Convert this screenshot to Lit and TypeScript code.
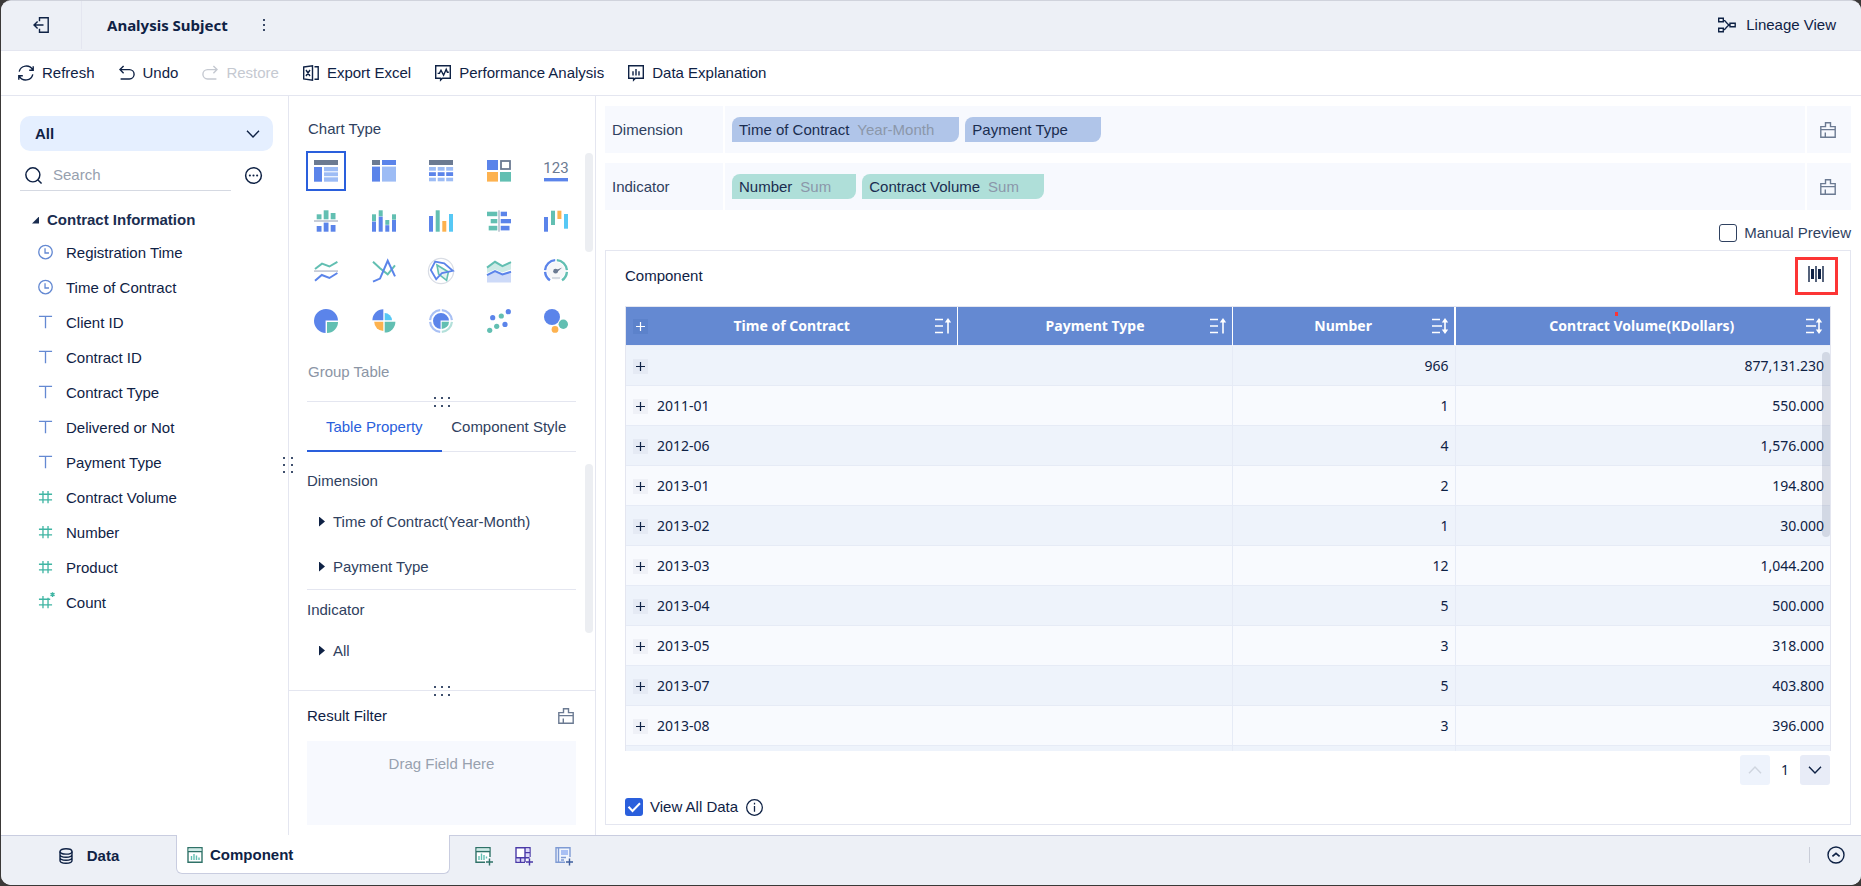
import { LitElement, html, svg, css, nothing } from "lit";
import type { TemplateResult } from "lit";
import { customElement, state } from "lit/decorators.js";
import { classMap } from "lit/directives/class-map.js";

const BLUE = "#5b84ea";
const LIGHT = "#9dbcf5";
const TEAL = "#62bfb2";
const ORANGE = "#fdb24f";
const CYAN = "#56c8f5";
const SLATE = "#6b7a92";
const RULE = "#c7cdd8";

const rect = (x: number, y: number, w: number, h: number, fill: string) =>
  svg`<rect x=${x} y=${y} width=${w} height=${h} fill=${fill}></rect>`;
const line = (points: string, stroke: string) =>
  svg`<polyline points=${points} fill="none" stroke=${stroke} stroke-width="2"></polyline>`;
const dot = (cx: number, cy: number, r: number, fill: string) =>
  svg`<circle cx=${cx} cy=${cy} r=${r} fill=${fill}></circle>`;

interface ChartType {
  name: string;
  art: unknown;
}

const CHART_TYPES: ChartType[] = [
  {
    name: "Group Table",
    art: [
      rect(0, 1, 24, 5, SLATE), rect(0, 8, 8, 14.7, BLUE),
      rect(10, 8, 14, 4.3, LIGHT), rect(10, 13.3, 14, 3.9, LIGHT), rect(10, 18.3, 14, 4.4, LIGHT),
    ],
  },
  {
    name: "Cross Table",
    art: [
      rect(0, 1, 8, 5, SLATE), rect(10, 1, 14, 5, BLUE),
      rect(0, 7.6, 8, 15, BLUE), rect(10, 7.6, 14, 15, LIGHT),
    ],
  },
  {
    name: "Detail Table",
    art: [
      rect(0, 1, 24, 5, SLATE),
      ...[0, 8.7, 17.2].map((x) => [
        rect(x, 8, 6.9, 3.7, LIGHT), rect(x, 13.2, 6.9, 3.8, BLUE), rect(x, 18.7, 6.9, 3.6, LIGHT),
      ]),
    ],
  },
  {
    name: "Color Table",
    art: [
      rect(0, 1, 11, 10, BLUE),
      svg`<rect x="14" y="2" width="9" height="8" fill="none" stroke=${SLATE} stroke-width="1.8"></rect>`,
      rect(0, 13, 11, 9.6, ORANGE), rect(13, 13, 11, 9.6, TEAL),
    ],
  },
  {
    name: "KPI Card",
    art: [
      svg`<text x="12" y="14" text-anchor="middle" class="kpi">123</text>`,
      rect(0, 19, 24, 3.4, BLUE),
    ],
  },
  {
    name: "Contrast Column Chart",
    art: [
      rect(2.7, 5.3, 4.8, 5, TEAL), rect(9.7, 1.3, 4.8, 9, TEAL), rect(16.7, 4, 4.8, 6.3, TEAL),
      rect(0, 11, 24, 2, RULE),
      rect(2.7, 17, 4.8, 5.7, BLUE), rect(9.7, 13.6, 4.8, 9.1, BLUE), rect(16.7, 16, 4.8, 6.7, BLUE),
    ],
  },
  {
    name: "Stacked Column Chart",
    art: [
      rect(0, 5.3, 4, 7, TEAL), rect(0, 12.6, 4, 10.1, BLUE),
      rect(6.7, 1.3, 4, 6, TEAL), rect(6.7, 7.6, 4, 15.1, BLUE),
      rect(13.3, 11, 4, 4.8, TEAL), rect(13.3, 16.2, 4, 6.5, BLUE),
      rect(20, 5.3, 4, 5.4, TEAL), rect(20, 11, 4, 11.7, BLUE),
    ],
  },
  {
    name: "Multi-Series Column Chart",
    art: [
      rect(0, 7, 4, 15.7, BLUE), rect(6.7, 1.3, 4, 21.4, TEAL),
      rect(13.3, 12, 4, 10.7, ORANGE), rect(20, 5, 4, 17.7, CYAN),
    ],
  },
  {
    name: "Contrast Bar Chart",
    art: [
      rect(0, 2.7, 10.3, 4.5, TEAL), rect(3.7, 10, 6.6, 4.3, TEAL), rect(1.7, 16.8, 8.6, 4.6, TEAL),
      rect(11, 1.3, 2, 21.4, RULE),
      rect(13.7, 2.7, 6.3, 4.5, BLUE), rect(13.7, 10, 10.3, 4.3, BLUE), rect(13.7, 16.8, 8.8, 4.6, BLUE),
    ],
  },
  {
    name: "Waterfall Chart",
    art: [
      rect(0, 8, 4, 14.7, BLUE), rect(7, 1.7, 4, 14.3, TEAL),
      rect(13.4, 1.7, 4, 8.3, ORANGE), rect(20, 5, 4, 14.7, CYAN),
    ],
  },
  {
    name: "Range Line Chart",
    art: [
      line("1,10 8,4.6 15.4,7.5 23.4,2.8", TEAL), rect(0, 11.2, 24, 1.8, RULE),
      line("1,21.8 7.8,16 15.4,19 23.4,14", BLUE),
    ],
  },
  {
    name: "Line Chart",
    art: [line("1,2.7 8,9.2 15.7,15.4 23,6.4", TEAL), line("1,22.6 8,19.6 15.7,1.8 23,17.4", BLUE)],
  },
  {
    name: "Radar Chart",
    art: [
      svg`<circle cx="12" cy="12" r="12.6" fill="none" stroke="#d9dde5" stroke-width="1.2"></circle>
        <polygon points="8,6 19.4,13 17.6,21.4 9.6,15" fill="#e3f3f1" stroke=${TEAL} stroke-width="1.6"></polygon>
        <polygon points="6.2,2.6 15.2,4.4 23.8,11.8 13,14 7.2,20.2 1.8,11" fill="none" stroke=${BLUE} stroke-width="1.8"></polygon>`,
    ],
  },
  {
    name: "Area Chart",
    art: [
      svg`<path d="M0 9 8 3 15.4 7.4 24 3.4V10.5L15.4 13.6 8 10.4 0 14Z" fill="#cdeae6"></path>
        <path d="M0 16.4 8 12.4 15.4 15.4 24 13V23.6H0Z" fill="#cddaf8"></path>`,
      line("0,8.6 8,2.8 15.4,7.2 24,3.2", TEAL), line("0,16.2 8,12.2 15.4,15.4 24,12.8", BLUE),
    ],
  },
  {
    name: "Gauge",
    art: [
      svg`<circle cx="12" cy="12" r="9" fill="#f6f7f9"></circle>
        <g fill="none" stroke-width="2.4">
          <path d="M11.2 1.1A10.9 10.9 0 0 0 1.1 11.2M1.1 12.8A10.9 10.9 0 0 0 6 21.2" stroke=${BLUE}></path>
          <path d="M12.8 1.1A10.9 10.9 0 0 1 22.9 11.2M22.9 12.8A10.9 10.9 0 0 1 18 21.2" stroke=${TEAL}></path>
        </g>
        <path d="M11.6 11.2 18.2 8.4 13 13.2Z" fill=${SLATE}></path>
        <path d="M8 19h8" stroke=${RULE} stroke-width="1.4"></path>`,
      dot(11.6, 12.2, 2.4, SLATE),
    ],
  },
  {
    name: "Pie Chart",
    art: [
      svg`<path d="M11.6 24A12 12 0 1 1 24 11.6H11.6Z" fill=${BLUE}></path>
        <path d="M13 13H24A11 11 0 0 1 13 24Z" fill=${TEAL}></path>`,
    ],
  },
  {
    name: "Rose Chart",
    art: [
      svg`<path d="M11.3 11.3H0.4A11 11 0 0 1 11.3 0.3Z" fill=${BLUE}></path>
        <path d="M12.7 11.3V4A7.4 7.4 0 0 1 20 11.3Z" fill=${CYAN}></path>
        <path d="M11.3 12.8V22A9.2 9.2 0 0 1 2.2 12.8Z" fill=${ORANGE}></path>
        <path d="M12.7 12.8H23.4A10.8 10.8 0 0 1 12.7 23.6Z" fill=${TEAL}></path>`,
    ],
  },
  {
    name: "Multi-Layer Pie Chart",
    art: [
      svg`<g fill="none" stroke-width="2.2">
          <path d="M11.2 22.9A10.9 10.9 0 0 1 1.1 12.8M1.1 11.2A10.9 10.9 0 0 1 11.2 1.1M12.8 1.1A10.9 10.9 0 0 1 22.9 11.2" stroke="#a9c0f4"></path>
          <path d="M22.9 12.8A10.9 10.9 0 0 1 12.8 22.9" stroke="#b3e0da"></path>
        </g>
        <path d="M11.6 20A8 8 0 1 1 20 11.6H11.6Z" fill=${BLUE}></path>
        <path d="M12.7 12.7H20A7.3 7.3 0 0 1 12.7 20Z" fill=${TEAL}></path>`,
    ],
  },
  {
    name: "Scatter Chart",
    art: [
      dot(2.7, 21.3, 2.6, TEAL), dot(9.7, 17.3, 2.6, TEAL), dot(5.7, 8.7, 2.6, BLUE),
      dot(14.3, 7, 2.6, TEAL), dot(18, 15.4, 2.6, BLUE), dot(21.3, 2.7, 2.6, BLUE),
    ],
  },
  {
    name: "Bubble Chart",
    art: [dot(8, 8, 8, BLUE), dot(19.3, 15.3, 4.7, TEAL), dot(11, 20.4, 3.4, ORANGE)],
  },
];

const ICONS: Record<string, TemplateResult> = {
  exit: svg`<path d="M6.500 4.200V.8h8.700v14.400H6.500V11.800M10.500 8H1M4.600 4.400 1 8l3.600 3.600"></path>`,
  more: svg`<g fill="currentColor" stroke="none"><circle cx="8" cy="3" r="1.1"></circle><circle cx="8" cy="8" r="1.1"></circle><circle cx="8" cy="13" r="1.1"></circle></g>`,
  lineage: svg`<path d="M.7 1.200h4.600v3.600H.7zM.7 11.200h4.600v3.600H.7zM12 6.200h5.200v3.600H12zM5.300 3c3 0 3 5 6.700 5M5.300 13c3 0 3-5 6.700-5"></path>`,
  refresh: svg`<path d="M1.200 6.600A7.300 7.300 0 0 1 14.600 4.600M15.200 1.200v4h-4M14.800 9.400A7.300 7.300 0 0 1 1.400 11.400M.8 14.800v-4h4"></path>`,
  undo: svg`<path d="M4.600 1 1 4.600 4.600 8.200M1 4.600h9.400a4.600 4.600 0 0 1 0 9.400H1.600"></path>`,
  redo: svg`<path d="M11.400 1 15 4.600 11.400 8.200M15 4.600H5.600a4.600 4.600 0 0 0 0 9.400h8.800"></path>`,
  excel: svg`<path d="M.7 2 9.500.7v14.600L.7 14zM11.500 1.700h3.700v12.600h-3.700M3 5l4 6M7 5l-4 6"></path>`,
  perf: svg`<path d="M.7.8h14.600v12.400H7.400L5.600 15v-1.800H.7zM2.600 8.400h1.800L6 5.200l2.600 5 2.600-6 1.200 3h1.400"></path>`,
  explain: svg`<path d="M.7.8h14.600v12.400H7.400L5.600 15v-1.800H.7zM5 6.200v4.400M8 4v6.600M11 6.200v4.400"></path>`,
  chevronDown: svg`<path d="M2 4.800 8 11l6-6.200"></path>`,
  chevronUp: svg`<path d="M2 11.200 8 5l6 6.200"></path>`,
  search: svg`<circle cx="7.400" cy="7.400" r="6.600"></circle><path d="m12.200 12.200 3.400 3.400"></path>`,
  ellipsis: svg`<circle cx="8" cy="8" r="7.400"></circle><g fill="currentColor" stroke="none"><circle cx="4.600" cy="8" r="1"></circle><circle cx="8" cy="8" r="1"></circle><circle cx="11.400" cy="8" r="1"></circle></g>`,
  clock: svg`<circle cx="8" cy="7.500" r="7.200"></circle><path d="M7.500 3.500v5h4.200"></path>`,
  text: svg`<path d="M1 1.500h14M8 1.500V14"></path>`,
  number: svg`<path d="M1 4.500h14M1 10.500h14M5.300 1v13M10.700 1v13"></path>`,
  count: svg`<path d="M1 4.500h12M1 10.500h14M5.300 1v13M10.700 3v11"></path><path d="M15.500-3v5M13.300-1.800l4.400 2.600M13.300.8l4.400-2.600" stroke-width="1.500"></path>`,
  broom: svg`<path d="M.8 7.600V4.600h4.700V.8h5v3.800h4.700v10.600H.8V7.600h14.400M5.300 15.200V10.600"></path>`,
  columns: svg`<path d="M1 0v16M8 0v16M15 0v16"></path><path d="M4.500 3v10M11.500 3v10" stroke-width="3"></path>`,
  sortAsc: svg`<path d="M0 1.500h8M0 8h8M0 14.500h8M13 15.500V2"></path><path d="M9.800 4.600 13 0l3.200 4.600z" fill="currentColor" stroke="none"></path>`,
  sortBoth: svg`<path d="M0 1.500h8M0 8h10M0 14.500h8M13 2v12"></path><path d="M9.800 4.600 13 0l3.200 4.600zM9.800 11.400 13 16l3.200-4.600z" fill="currentColor" stroke="none"></path>`,
  info: svg`<circle cx="8" cy="8" r="7.400"></circle><path d="M8 6.600V12M8 3.600v1.600"></path>`,
  database: svg`<ellipse cx="8" cy="3.400" rx="6" ry="2.700"></ellipse><path d="M2 3.400v9.200c0 3.600 12 3.600 12 0V3.400M2 6.500c0 3.600 12 3.600 12 0M2 9.600c0 3.600 12 3.600 12 0"></path>`,
  sheet: svg`<path d="M1 .8h14v14.400H1z" fill="#fff"></path><path d="M1.600 1.400h12.800v2.800H1.600z" fill="#cdeae6" stroke="none"></path><path d="M1 4.600h14"></path><path d="M4.500 9v4M7 7v6M9.500 8.500V13M12 10.500V13" stroke="#62bfb2"></path>`,
  sheetAdd: svg`<path d="M10 15.200H1V.8h14V10" fill="#fff"></path><path d="M1.600 1.400h12.800v2.800H1.600z" fill="#cdeae6" stroke="none"></path><path d="M1 4.600h14"></path><path d="M4 9v4M6.500 6.500V13M9 8v5M11.500 9.500v2" stroke="#62bfb2"></path><path d="M14.500 11.500v7M11 15h7"></path>`,
  boardAdd: svg`<path d="M10 15.200H1V.8h14V10" fill="#fff"></path><path d="M10 1.400h4.400V10H10zM1.600 11h8v3.600h-8z" fill="#dcd8f8" stroke="none"></path><path d="M10 .8V15M1 10.800h13.500M10 5.600h5M5.500 10.800v4.400"></path><path d="M14.500 11.500v7M11 15h7"></path>`,
  reportAdd: svg`<path d="M10 15.200H1V.8h14V10" fill="#f1f5fd"></path><path d="M6 3h7v5H6z" fill="#a9c0f4" stroke="none"></path><path d="M3.500.8v14.400M6 10.500h5M6 13h3"></path><path d="M14.500 11.500v7M11 15h7" stroke="#3f5f9f"></path>`,
  circleUp: svg`<circle cx="8" cy="8" r="8"></circle><path d="m4.400 9.400 3.600-3 3.600 3" stroke-width="1.800"></path>`,
};

const icon = (name: string, tone = "") => html`<svg
  class="icon ${tone}"
  viewBox=${name === "lineage" ? "0 0 18 16" : "0 0 16 16"}
  aria-hidden="true"
>${ICONS[name]}</svg>`;

const FIELDS: [string, string, string][] = [
  ["clock", "blue", "Registration Time"],
  ["clock", "blue", "Time of Contract"],
  ["text", "blue", "Client ID"],
  ["text", "blue", "Contract ID"],
  ["text", "blue", "Contract Type"],
  ["text", "blue", "Delivered or Not"],
  ["text", "blue", "Payment Type"],
  ["number", "teal", "Contract Volume"],
  ["number", "teal", "Number"],
  ["number", "teal", "Product"],
  ["count", "teal", "Count"],
];

const TOOLS: [string, string, boolean][] = [
  ["refresh", "Refresh", false],
  ["undo", "Undo", false],
  ["redo", "Restore", true],
  ["excel", "Export Excel", false],
  ["perf", "Performance Analysis", false],
  ["explain", "Data Explanation", false],
];

const SHELVES: { label: string; tone: string; chips: [string, string][] }[] = [
  { label: "Dimension", tone: "dim", chips: [["Time of Contract", "Year-Month"], ["Payment Type", ""]] },
  { label: "Indicator", tone: "ind", chips: [["Number", "Sum"], ["Contract Volume", "Sum"]] },
];

const COLUMNS: [string, string][] = [
  ["Time of Contract", "sortAsc"],
  ["Payment Type", "sortAsc"],
  ["Number", "sortBoth"],
  ["Contract Volume(KDollars)", "sortBoth"],
];

const ROWS: [string, string, string][] = [
  ["", "966", "877,131.230"],
  ["2011-01", "1", "550.000"],
  ["2012-06", "4", "1,576.000"],
  ["2013-01", "2", "194.800"],
  ["2013-02", "1", "30.000"],
  ["2013-03", "12", "1,044.200"],
  ["2013-04", "5", "500.000"],
  ["2013-05", "3", "318.000"],
  ["2013-07", "5", "403.800"],
  ["2013-08", "3", "396.000"],
  ["", "", ""],
];

@customElement("app-root")
export class AppRoot extends LitElement {
  @state() private chart = "Group Table";
  @state() private tab = "Table Property";

  static styles = css`
    :host {
      --ink: #0f2245;
      --soft: #2f4160;
      --mute: #8b95a5;
      --edge: #e4e6f0;
      --bar: #edf0f6;
      --shelf: #f7f9fe;
      --accent: #2a5fdc;
      display: block;
      background: #3b3938;
      padding: 0 0 1px 1px;
      color: var(--ink);
      font: 15px/20px "Liberation Sans", Arial, sans-serif;
    }
    * { box-sizing: border-box; }
    button, input, select { font: inherit; color: inherit; margin: 0; }
    button { border: 0; padding: 0; background: none; cursor: pointer; text-align: left; }
    h1, h2, h3, p { margin: 0; font: inherit; }
    a { color: inherit; text-decoration: none; }
    ul { list-style: none; margin: 0; padding: 0; }

    .icon {
      display: block;
      flex: none;
      width: 16px;
      height: 16px;
      overflow: visible;
      fill: none;
      stroke: currentColor;
      stroke-width: 1.4;
    }
    .icon.blue { color: #6489d2; }
    .icon.teal { color: #3fb5a3; }
    .icon.grey { color: #6b7a92; }
    .icon.green { color: #2f7268; }
    .icon.violet { color: #4a3aa8; }
    .icon.steel { color: #7f9bd4; }
    .icon.wide { width: 18px; }

    .window {
      display: flex;
      flex-direction: column;
      height: calc(100vh - 1px);
      overflow: hidden;
      background: #fff;
      border-radius: 10px;
      border-top: 1px solid #d0d3dc;
    }

    .titlebar {
      display: flex;
      align-items: center;
      flex: none;
      height: 50px;
      padding-bottom: 1px;
      background: var(--bar);
      border-bottom: 1px solid var(--edge);
    }
    .exit {
      display: flex;
      align-items: center;
      justify-content: center;
      width: 81px;
      align-self: stretch;
      border-right: 1px solid var(--edge);
    }
    .title {
      margin: 0 28px 0 25px;
      font: bold 15px/20px "Noto Sans", sans-serif;
    }
    .lineage {
      display: flex;
      align-items: center;
      gap: 10px;
      margin: 0 25px 0 auto;
    }

    .toolbar {
      display: flex;
      align-items: center;
      flex: none;
      gap: 24px;
      height: 45px;
      padding: 0 17px;
      border-bottom: 1px solid var(--edge);
    }
    .tool { display: flex; align-items: center; gap: 8px; }
    .tool:disabled { color: #c5c9d1; cursor: default; }

    .work { display: flex; flex: 1; min-height: 0; }

    .fields {
      position: relative;
      flex: none;
      width: 288px;
      padding: 20px 15px 0 19px;
      border-right: 1px solid var(--edge);
    }
    .picker { display: block; position: relative; }
    .picker select {
      appearance: none;
      display: block;
      width: 100%;
      height: 35px;
      padding: 0 40px 0 15px;
      border: 0;
      border-radius: 10px;
      background: #e5efff;
      font-weight: bold;
    }
    .picker .icon {
      position: absolute;
      right: 12px;
      top: 10px;
      pointer-events: none;
    }
    .find { display: flex; align-items: center; gap: 14px; padding-right: 11px; }
    .searchbox {
      display: flex;
      align-items: center;
      flex: 1;
      min-width: 0;
      gap: 11px;
      height: 40px;
      padding-top: 9px;
      padding-left: 5px;
      border-bottom: 1px solid #d5d9e2;
    }
    .searchbox input {
      flex: 1;
      min-width: 0;
      border: 0;
      padding: 0;
      outline: 0;
      background: none;
    }
    .searchbox input::placeholder { color: #96a0ae; opacity: 1; }
    .find button { padding-top: 8px; }
    .find .icon { width: 17px; height: 17px; }
    .group {
      display: flex;
      align-items: center;
      gap: 8px;
      margin-top: 19px;
      padding-left: 12px;
      font-weight: bold;
      color: #1a2d50;
    }
    .corner { width: 7px; height: 7px; background: #1a2d50; clip-path: polygon(100% 0, 100% 100%, 0 100%); }
    .field {
      display: flex;
      align-items: center;
      gap: 13px;
      height: 35px;
      width: 100%;
      padding-left: 18px;
    }
    .field .icon { width: 15px; height: 15px; }
    .list { padding-top: 5px; }

    .grip {
      position: absolute;
      display: grid;
      cursor: grab;
    }
    .grip i { width: 2px; height: 2px; background: #3f506e; }
    .grip.v { grid-template-columns: 2px 2px; gap: 5px 6px; right: -5px; top: 361px; }
    .grip.h { grid-template-columns: 2px 2px 2px; gap: 6px 5px; left: calc(50% - 8px); top: -5px; }

    .config {
      display: flex;
      flex-direction: column;
      flex: none;
      width: 307px;
      border-right: 1px solid var(--edge);
    }
    .types { position: relative; padding: 23px 19px 19px 17px; color: var(--soft); }
    .types .cap { padding-left: 2px; }
    .types .cap.mute { margin-top: 21px; color: var(--mute); }
    .grid {
      display: grid;
      grid-template-columns: repeat(5, 40px);
      justify-content: space-between;
      row-gap: 10px;
      margin-top: 12px;
    }
    .type {
      display: flex;
      align-items: center;
      justify-content: center;
      height: 40px;
      border: 2px solid transparent;
    }
    .type.on { border-color: var(--accent); }
    .type svg { width: 24px; height: 24px; overflow: visible; }
    .kpi { font: 15px Roboto, sans-serif; fill: #6b7a92; }
    .thumb { position: absolute; width: 8px; border-radius: 4px; background: #eceef2; right: 2px; }
    .thumb.a { top: 57px; height: 99px; }
    .thumb.b { top: 12px; height: 169px; }

    .tabs { position: relative; display: flex; margin: 0 19px 0 18px; border-top: 1px solid var(--edge); }
    .tab {
      flex: 1;
      height: 50px;
      text-align: center;
      color: var(--soft);
      border-bottom: 1px solid var(--edge);
      white-space: nowrap;
    }
    .tab.on { color: var(--accent); border-bottom: 2px solid var(--accent); padding-top: 1px; }
    .props { position: relative; flex: 1; min-height: 0; padding: 19px 19px 0 18px; color: var(--soft); }
    .prop {
      display: flex;
      align-items: center;
      gap: 8px;
      height: 45px;
      padding-left: 12px;
    }
    .prop::before { content: ""; width: 6px; height: 10px; background: var(--ink); clip-path: polygon(0 0, 100% 50%, 0 100%); }
    .props h3 + .prop { margin-top: 8px; }
    .part + .part { border-top: 1px solid var(--edge); padding-top: 10px; }

    .filter { position: relative; flex: none; border-top: 1px solid var(--edge); padding: 15px 19px 10px 18px; }
    .filter header { display: flex; justify-content: space-between; align-items: center; padding-right: 2px; }
    .drop {
      margin-top: 15px;
      height: 84px;
      padding-top: 13px;
      text-align: center;
      background: var(--shelf);
      color: #98a1af;
    }

    .main {
      display: flex;
      flex-direction: column;
      flex: 1;
      min-width: 0;
      padding: 10px 10px 10px 9px;
    }
    .shelf {
      display: flex;
      align-items: stretch;
      flex: none;
      height: 47px;
      margin-bottom: 10px;
      background: var(--shelf);
      color: var(--soft);
    }
    .shelf h3 { width: 118px; padding: 14px 7px; }
    .shelf ul {
      display: flex;
      align-items: center;
      flex: 1;
      gap: 6px;
      padding-left: 7px;
      border: solid #fff;
      border-width: 0 2px;
    }
    .chip {
      display: flex;
      align-items: center;
      gap: 8px;
      height: 25px;
      padding: 0 25px 0 7px;
      border-radius: 8px 0 8px 0;
      color: #1a2d50;
    }
    .chip.dim { background: #b0c5e9; }
    .chip.ind { background: #afdfd9; }
    .chip .agg { color: #8b97aa; }
    .clear { width: 44px; padding-right: 2px; display: flex; align-items: center; justify-content: center; }

    .check { display: flex; align-items: center; gap: 7px; }
    .check input {
      appearance: none;
      width: 18px;
      height: 18px;
      border: 1px solid var(--soft);
      border-radius: 3px;
      background: #fff;
    }
    .check input:checked {
      border: 0;
      background: var(--accent);
    }
    .tick { display: grid; }
    .tick > * { grid-area: 1 / 1; }
    .tick svg { width: 18px; height: 18px; pointer-events: none; fill: none; stroke: #fff; stroke-width: 2; }
    .manual { align-self: flex-end; margin: 3px 0 7px; color: var(--soft); }

    .card {
      display: flex;
      flex-direction: column;
      flex: 1;
      min-height: 0;
      border: 1px solid var(--edge);
      padding: 6px 12px 5px 19px;
    }
    .cardhead { display: flex; align-items: center; justify-content: space-between; }
    .adjust {
      display: flex;
      justify-content: center;
      width: 43px;
      height: 38px;
      padding: 6px 1px 0 0;
      border: 3px solid #fc3535;
    }
    .sheet {
      position: relative;
      flex: 1;
      min-height: 0;
      overflow: hidden;
      margin: 11px 7px 0 0;
      border: 1px solid var(--edge);
      border-bottom: 0;
    }
    .thumb.c { top: 45px; height: 185px; right: 0; background: #0f224520; }
    .mark { position: absolute; top: 5px; right: 212px; width: 3px; height: 4px; background: #fc3535; }
    table {
      width: 100%;
      table-layout: fixed;
      border-collapse: separate;
      border-spacing: 0;
      font: 14px/20px "Noto Sans", sans-serif;
    }
    .c1 { width: 27.6%; }
    .c2 { width: 22.8%; }
    .c3 { width: 18.5%; }
    th {
      height: 39px;
      padding: 0 6px;
      background: #6489d2;
      color: #fff;
      border-right: 1px solid #fff;
      border-bottom: 1px solid #e9edf8;
      font-weight: bold;
    }
    th:nth-child(3) { border-right-width: 2px; }
    th:last-child { border-right: 0; padding-right: 8px; }
    .head { display: flex; align-items: center; }
    .head .name { flex: 1; text-align: center; }
    .head .lead { width: 16px; display: flex; }
    .head .lead .plus { margin-left: 1px; }
    .head .icon { stroke-width: 1.6; }
    th .plus { background: #5c82cb; color: #fff; }
    td {
      height: 40px;
      padding: 1px 6px 0 7px;
      background: #f8fafe;
      border-bottom: 1px solid #e6ebf6;
      border-right: 1px solid #e6ebf6;
    }
    td:last-child { border-right: 0; }
    tbody tr:nth-child(odd) td { background: #eef3fb; }
    .num { text-align: right; }
    .key { display: flex; align-items: center; gap: 9px; }
    .plus {
      width: 15px;
      height: 15px;
      display: grid;
      place-items: center;
      background: #0f22450a;
    }
    .plus svg { width: 9px; height: 9px; stroke: currentColor; stroke-width: 1.2; }

    .pager {
      display: flex;
      align-items: center;
      justify-content: flex-end;
      gap: 10px;
      margin: 4px 8px 10px 0;
      font: 14px/20px "Noto Sans", sans-serif;
    }
    .pager span { width: 10px; text-align: center; }
    .pager button {
      display: grid;
      place-items: center;
      width: 30px;
      height: 30px;
      border-radius: 3px;
      background: #e8ecf7;
    }
    .pager button:disabled { background: #eef3fc; color: #cfd5df; }
    .foot { display: flex; align-items: center; gap: 8px; height: 24px; }
    .foot .icon { width: 17px; height: 17px; stroke-width: 1.2; }

    .bottom {
      display: flex;
      flex: none;
      height: 50px;
      background: var(--bar);
    }
    .sheetTab {
      display: flex;
      align-items: center;
      font-weight: bold;
      height: 39px;
      padding-top: 2px;
    }
    .dataTab {
      justify-content: center;
      gap: 13px;
      width: 175px;
      border-top: 1px solid #c9cde0;
    }
    .compTab {
      gap: 7px;
      width: 274px;
      padding-left: 10px;
      background: #fff;
      border: 1px solid #c9cde0;
      border-top: 0;
      border-radius: 0 0 6px 6px;
    }
    .adds {
      display: flex;
      align-items: flex-start;
      flex: 1;
      gap: 24px;
      padding: 11px 17px 0 25px;
      border-top: 1px solid #c9cde0;
    }
    .expand { margin-left: auto; padding-left: 18px; border-left: 1px solid #c9cdd8; }
  `;

  private grip(kind: "v" | "h") {
    return html`<div class="grip ${kind}" aria-hidden="true"><i></i><i></i><i></i><i></i><i></i><i></i></div>`;
  }

  private plus(label: string) {
    return html`<button class="plus" aria-label=${label}>
      <svg viewBox="0 0 9 9" aria-hidden="true"><path d="M4.500 0v9M0 4.500h9"></path></svg>
    </button>`;
  }

  private renderFields() {
    return html`<aside class="fields">
      <label class="picker">
        <select aria-label="Table">
          <option>All</option>
        </select>
        ${icon("chevronDown")}
      </label>
      <div class="find">
        <label class="searchbox">
          ${icon("search")}
          <input type="text" placeholder="Search" aria-label="Search" />
        </label>
        <button aria-label="More options">${icon("ellipsis")}</button>
      </div>
      <h2 class="group"><span class="corner"></span>Contract Information</h2>
      <ul class="list">
        ${FIELDS.map(
          ([kind, tone, name]) => html`<li><button class="field">${icon(kind, tone)}${name}</button></li>`,
        )}
      </ul>
      ${this.grip("v")}
    </aside>`;
  }

  private renderConfig() {
    return html`<section class="config">
      <div class="types">
        <h2 class="cap">Chart Type</h2>
        <div class="grid">
          ${CHART_TYPES.map(
            (type) => html`<button
              class=${classMap({ type: true, on: type.name === this.chart })}
              aria-label=${type.name}
              @click=${() => (this.chart = type.name)}
            >
              <svg viewBox="0 0 24 24" aria-hidden="true">${type.art}</svg>
            </button>`,
          )}
        </div>
        <p class="cap mute">${this.chart}</p>
        <div class="thumb a"></div>
      </div>
      <div class="tabs">
        ${["Table Property", "Component Style"].map(
          (name) => html`<button
            class=${classMap({ tab: true, on: name === this.tab })}
            @click=${() => (this.tab = name)}
          >${name}</button>`,
        )}
        ${this.grip("h")}
      </div>
      <div class="props">
        <div class="part">
          <h3>Dimension</h3>
          <button class="prop">Time of Contract(Year-Month)</button>
          <button class="prop">Payment Type</button>
        </div>
        <div class="part">
          <h3>Indicator</h3>
          <button class="prop">All</button>
        </div>
        <div class="thumb b"></div>
      </div>
      <div class="filter">
        ${this.grip("h")}
        <header>
          <h3>Result Filter</h3>
          <button aria-label="Clear filter">${icon("broom", "grey")}</button>
        </header>
        <p class="drop">Drag Field Here</p>
      </div>
    </section>`;
  }

  private renderTable() {
    return html`<div class="sheet">
      <table>
        <colgroup>
          <col class="c1" /><col class="c2" /><col class="c3" /><col />
        </colgroup>
        <thead>
          <tr>
            ${COLUMNS.map(
              ([name, sort], i) => html`<th scope="col">
                <div class="head">
                  <span class="lead">${i === 0 ? this.plus("Expand all") : nothing}</span>
                  <span class="name">${name}</span>
                  <button aria-label="Sort ${name}">${icon(sort)}</button>
                </div>
              </th>`,
            )}
          </tr>
        </thead>
        <tbody>
          ${ROWS.map(
            ([month, count, volume]) => html`<tr>
              <td colspan="2"><div class="key">${this.plus("Expand row")}${month}</div></td>
              <td class="num">${count}</td>
              <td class="num">${volume}</td>
            </tr>`,
          )}
        </tbody>
      </table>
      <div class="thumb c"></div>
      <div class="mark"></div>
    </div>`;
  }

  private renderMain() {
    return html`<main class="main">
      ${SHELVES.map(
        (shelf) => html`<div class="shelf">
          <h3>${shelf.label}</h3>
          <ul>
            ${shelf.chips.map(
              ([name, agg]) => html`<li class="chip ${shelf.tone}">
                <span>${name}</span><span class="agg">${agg}</span>
              </li>`,
            )}
          </ul>
          <button class="clear" aria-label="Clear ${shelf.label}">${icon("broom", "grey")}</button>
        </div>`,
      )}
      <label class="check manual"><input type="checkbox" />Manual Preview</label>
      <section class="card">
        <header class="cardhead">
          <h2>Component</h2>
          <button class="adjust" aria-label="Adjust column width">${icon("columns")}</button>
        </header>
        ${this.renderTable()}
        <div class="pager">
          <button disabled aria-label="Previous page">${icon("chevronUp")}</button>
          <span>1</span>
          <button aria-label="Next page">${icon("chevronDown")}</button>
        </div>
        <div class="foot">
          <label class="check">
            <span class="tick">
              <input type="checkbox" checked />
              <svg viewBox="0 0 18 18" aria-hidden="true"><path d="m3.500 8.800 4 4.200 7.500-7.800"></path></svg>
            </span>
            View All Data
          </label>
          <button aria-label="About viewing all data">${icon("info")}</button>
        </div>
      </section>
    </main>`;
  }

  render() {
    return html`<div class="window">
      <header class="titlebar">
        <button class="exit" aria-label="Exit">${icon("exit")}</button>
        <h1 class="title">Analysis Subject</h1>
        <button aria-label="More">${icon("more")}</button>
        <a class="lineage" href="#lineage">${icon("lineage", "wide")}Lineage View</a>
      </header>
      <nav class="toolbar">
        ${TOOLS.map(
          ([glyph, label, off]) => html`<button class="tool" ?disabled=${off}>${icon(glyph)}${label}</button>`,
        )}
      </nav>
      <div class="work">${this.renderFields()} ${this.renderConfig()} ${this.renderMain()}</div>
      <footer class="bottom">
        <button class="sheetTab dataTab">${icon("database")}Data</button>
        <button class="sheetTab compTab">${icon("sheet", "green")}Component</button>
        <div class="adds">
          <button aria-label="Add component">${icon("sheetAdd", "green")}</button>
          <button aria-label="Add dashboard">${icon("boardAdd", "violet")}</button>
          <button aria-label="Add report">${icon("reportAdd", "steel")}</button>
          <button class="expand" aria-label="Expand panel">${icon("circleUp")}</button>
        </div>
      </footer>
    </div>`;
  }
}
